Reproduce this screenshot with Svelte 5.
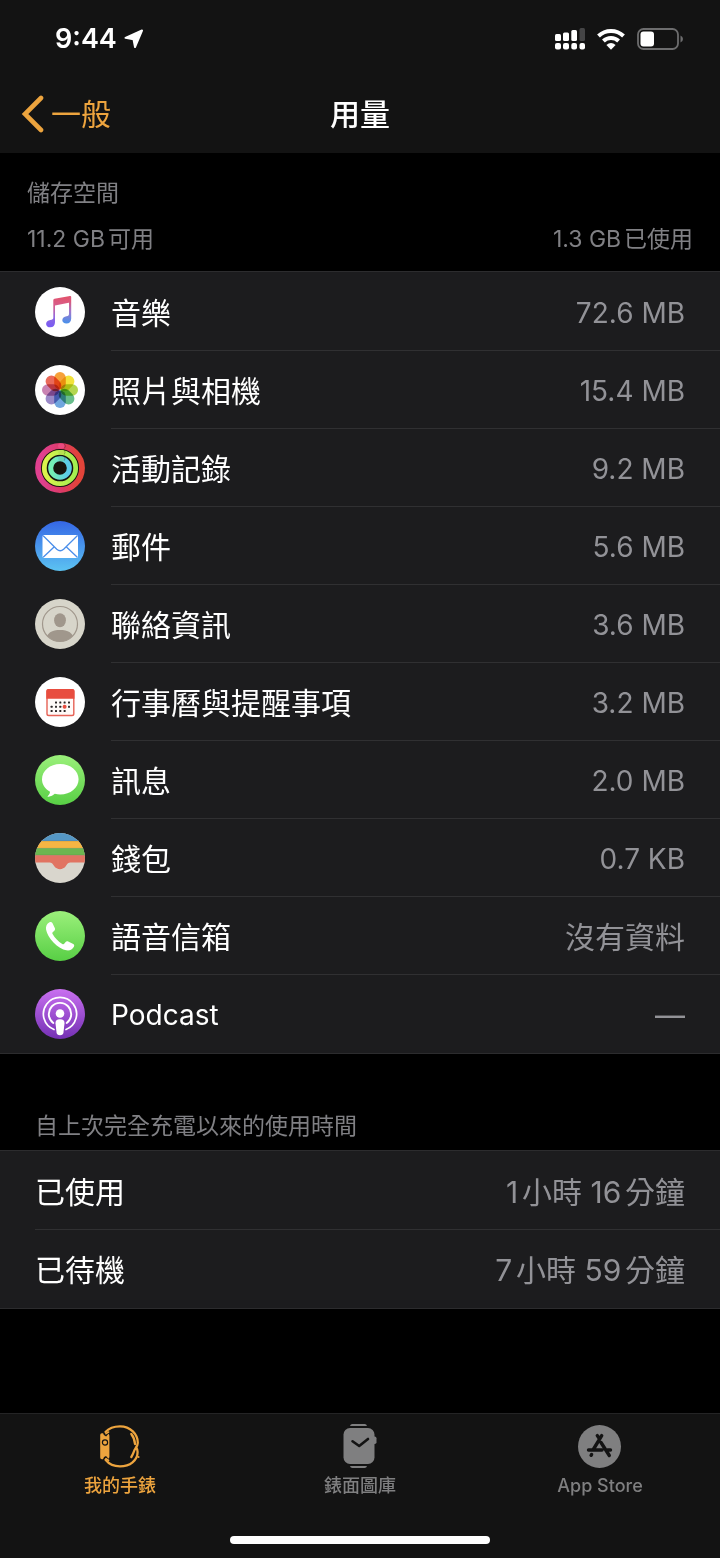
<script>
  const apps = [
    { icon: 'music', name: '音樂', size: '72.6 MB' },
    { icon: 'photos', name: '照片與相機', size: '15.4 MB' },
    { icon: 'activity', name: '活動記錄', size: '9.2 MB' },
    { icon: 'mail', name: '郵件', size: '5.6 MB' },
    { icon: 'contacts', name: '聯絡資訊', size: '3.6 MB' },
    { icon: 'calendar', name: '行事曆與提醒事項', size: '3.2 MB' },
    { icon: 'messages', name: '訊息', size: '2.0 MB' },
    { icon: 'wallet', name: '錢包', size: '0.7 KB' },
    { icon: 'phone', name: '語音信箱', size: '沒有資料' },
    { icon: 'podcast', name: 'Podcast', size: '—' }
  ];

  const times = [
    { name: '已使用', value: '1小時 16分鐘' },
    { name: '已待機', value: '7小時 59分鐘' }
  ];

  // Latin-only strings are set a step smaller than Chinese ones.
  const isLatin = (text) => /^[\w. ]+$/.test(text);

  const petals = ['#f6a13a', '#f2e23c', '#b4d650', '#68bd8c', '#70a6de', '#9b8ac8', '#c983b2', '#ea6a5a'];

  const days = [
    [21, 25.5], [25.3, 25.5], [29.6, 25.5], [34, 25.5],
    [16.6, 29.8], [21, 29.8], [25.3, 29.8], [34, 29.8],
    [16.6, 34], [21, 34], [25.3, 34], [29.6, 34]
  ];
</script>

{#snippet appIcon(kind)}
  <svg class="app-icon" viewBox="0 0 50 50" aria-hidden="true">
    {#if kind === 'music'}
      <defs>
        <linearGradient id="note" gradientUnits="userSpaceOnUse" x1="28" y1="10" x2="24" y2="40">
          <stop offset="0" stop-color="#e2536c" />
          <stop offset="0.35" stop-color="#d55f92" />
          <stop offset="0.7" stop-color="#8e68e0" />
          <stop offset="1" stop-color="#7a5cf2" />
        </linearGradient>
        <linearGradient id="note-right" gradientUnits="userSpaceOnUse" x1="34" y1="14" x2="32" y2="36">
          <stop offset="0" stop-color="#dc5878" />
          <stop offset="0.45" stop-color="#a277cc" />
          <stop offset="1" stop-color="#4a90ea" />
        </linearGradient>
      </defs>
      <circle cx="25" cy="25" r="25" fill="#fff" />
      <path fill="url(#note)" d="M18.3 13.2q0-1.2 1.2-1.4L35 9v6.4l-15 3v16.900c0 3-1.700 5-4.700 5-2.400 0-4.200-1.400-4.200-3.400 0-2.300 1.800-3.400 4.200-3.900 2-.4 3-.6 3-2.500z" />
      <path fill="url(#note-right)" d="M34 9.200 35.200 9q1-.1 1 .9v21.600c0 3-1.800 5-4.800 5-2.400 0-4.100-1.400-4.100-3.300 0-2.300 1.800-3.500 4.200-4 1.900-.4 2.500-.8 2.500-2.500z" />
    {:else if kind === 'photos'}
      <circle cx="25" cy="25" r="25" fill="#fff" />
      <g class="petals">
        {#each petals as color, i}
          <rect x="19.200" y="7" width="11.600" height="17.500" rx="5.800" fill={color} transform="rotate({i * 45} 25 25)" />
        {/each}
      </g>
    {:else if kind === 'activity'}
      <defs>
        <linearGradient id="move"><stop offset="0.1" stop-color="#e0408f" /><stop offset="0.55" stop-color="#dc3a66" /><stop offset="0.9" stop-color="#e2443a" /></linearGradient>
        <linearGradient id="exercise"><stop offset="0" stop-color="#dcf34c" /><stop offset="1" stop-color="#a2ee50" /></linearGradient>
        <linearGradient id="stand"><stop offset="0.1" stop-color="#74f0b4" /><stop offset="0.9" stop-color="#5ccbe8" /></linearGradient>
      </defs>
      <circle cx="25" cy="25" r="24" fill="#17150f" />
      <g fill="none">
        <circle cx="25" cy="25" r="22" stroke="url(#move)" stroke-width="5.800" />
        <circle cx="25" cy="25" r="15.700" stroke="url(#exercise)" stroke-width="4.800" />
        <circle cx="25" cy="25" r="9.300" stroke="url(#stand)" stroke-width="5" />
        <g stroke-linecap="round">
          <path d="M25.500 3h1.500" stroke="#ea4a80" stroke-width="5" />
          <path d="M25.500 9.300h1.500" stroke="#b9df51" stroke-width="4.600" />
          <path d="M25.500 15.700h1.500" stroke="#68cfb4" stroke-width="4.600" />
        </g>
        <path d="M29.400 .8q2 2.200 0 4.600M29.200 7.200q1.800 2.100 0 4.300M29.200 13.700q1.500 2 0 4" stroke="#000" stroke-opacity="0.35" stroke-width="0.800" />
      </g>
    {:else if kind === 'mail'}
      <defs><linearGradient id="sky" x2="0" y2="1"><stop offset="0" stop-color="#3567e6" /><stop offset="1" stop-color="#5cc3f2" /></linearGradient></defs>
      <circle cx="25" cy="25" r="25" fill="url(#sky)" />
      <rect x="7.500" y="14" width="35.500" height="23" rx="1.800" fill="#fff" />
      <path d="M8.200 14.700 21.800 28.200q3.400 3.200 6.800 0L42.300 14.700M8.200 36.300l11.100-10.600M42.300 36.300 31.200 25.700" fill="none" stroke="#4a8eea" stroke-width="1.300" />
    {:else if kind === 'contacts'}
      <defs><clipPath id="portrait"><circle cx="25" cy="25" r="17.500" /></clipPath></defs>
      <circle cx="25" cy="25" r="25" fill="#d7d5ca" />
      <g fill="#a0978c" clip-path="url(#portrait)">
        <ellipse cx="25" cy="21.300" rx="5.900" ry="7" />
        <path d="M10 45C10.500 33.500 17 31 25 31s14.500 2.500 15 14z" />
      </g>
      <circle cx="25" cy="25" r="17.500" fill="none" stroke="#a0978c" stroke-width="1.200" />
    {:else if kind === 'calendar'}
      <circle cx="25" cy="25" r="25" fill="#fff" />
      <rect x="12" y="12.700" width="26.800" height="25.800" rx="1.800" fill="#fffaf8" stroke="#e66256" stroke-width="1.400" />
      <path fill="#e84d3f" d="M11.300 14q0-2 2-2h24.200q2 0 2 2v7.800H11.300z" />
      <g fill="#2b2626">
        {#each days as [x, y]}
          <rect x={x - 1} y={y - 1} width="2" height="2" rx="0.500" />
        {/each}
      </g>
      <circle cx="29.600" cy="29.800" r="2" fill="#e84d3f" />
    {:else if kind === 'messages'}
      <defs><linearGradient id="leaf" x2="0" y2="1"><stop offset="0" stop-color="#9bf07b" /><stop offset="1" stop-color="#58cf45" /></linearGradient></defs>
      <circle cx="25" cy="25" r="25" fill="url(#leaf)" />
      <path fill="#fff" d="M25.200 9C15 9 7 15.700 7 24.300c0 5 2.800 9.500 8 12.400-.1 1.700-.8 3-2.200 4.400-.5.600 0 .9.700.7 2.500-.5 4.600-1.600 6.300-3.100 1.700.5 3.500.8 5.400.8 10.300 0 18.400-6.600 18.400-15.200S35.500 9 25.200 9z" />
    {:else if kind === 'wallet'}
      <defs><clipPath id="purse"><circle cx="25" cy="25" r="25" /></clipPath></defs>
      <g clip-path="url(#purse)">
        <path fill="#d9d6cd" d="M0 0h50v50H0z" />
        <path fill="#5597c5" d="M0 0h50v8H0z" />
        <path fill="#f5b544" d="M0 8h50v7.300H0z" />
        <path fill="#6cb650" d="M0 15.300h50v6.900H0z" />
        <path fill="#e17462" d="M0 22.200h50v7.200H36.500c-3.700 0-4.300 1.500-5.600 3.600-2.900 4.200-8.900 4.200-11.800 0-1.300-2.100-1.900-3.600-5.600-3.600H0z" />
        <path stroke="#000" stroke-opacity="0.130" stroke-width="0.900" d="M0 8h50M0 15.300h50M0 22.200h50" />
      </g>
    {:else if kind === 'phone'}
      <defs><linearGradient id="grass" x2="0" y2="1"><stop offset="0" stop-color="#9bf07b" /><stop offset="1" stop-color="#58cf45" /></linearGradient></defs>
      <circle cx="25" cy="25" r="25" fill="url(#grass)" />
      <path fill="#fff" d="M14.500 11.300c1.300-.7 2.200-.4 2.900.8l2.400 5c.5 1.200.3 2.100-.7 2.900l-1.200 1c-.7.700-.7 1.300-.3 2.100 2.300 4.200 5.600 7.500 9.700 9.800.9.500 1.500.4 2.100-.3l1-1.400c.8-1 1.700-1.200 2.800-.7l5 2.600c1.100.7 1.300 1.500.7 2.600-1.500 2.800-4.200 4.200-7.600 3.600-3.800-.7-8.700-3.700-12.800-7.900S11.900 22.600 11.100 18.800c-.6-3.200.7-6 3.400-7.500z" />
    {:else}
      <defs><linearGradient id="plum" x2="0" y2="1"><stop offset="0" stop-color="#c970f0" /><stop offset="1" stop-color="#7430b4" /></linearGradient></defs>
      <circle cx="25" cy="25" r="25" fill="url(#plum)" />
      <g fill="none" stroke="#fff" stroke-linecap="round">
        <path stroke-width="1.700" d="M19 40.500a16.600 16.600 0 1 1 12 0" />
        <path stroke-width="1.900" d="M18.300 34a11.200 11.200 0 1 1 13.400 0" />
      </g>
      <circle cx="25" cy="24.500" r="4.300" fill="#fff" />
      <path fill="#fff" d="M25 30.200c3.200 0 4.700 1.300 4.500 4l-1 9c-.3 2.200-1.300 3-3.500 3s-3.200-.8-3.500-3l-1-9c-.2-2.700 1.300-4 4.500-4z" />
    {/if}
  </svg>
{/snippet}

{#snippet row(name, value)}
  <div class="row">
    <span class:latin={isLatin(name)}>{name}</span>
    <span class="value" class:latin={isLatin(value)}>{value}</span>
  </div>
{/snippet}

<div class="page">
  <header>
    <div class="status">
      <div class="clock">
        <span>9:44</span>
        <svg width="20" height="20" viewBox="0 0 20 20" aria-hidden="true">
          <path d="M1.500 8.800 18 1.500 11 18l-1.500-7.800z" fill="#fff" stroke="#fff" stroke-width="2" stroke-linejoin="round" />
        </svg>
      </div>
      <div class="indicators">
        <svg width="30" height="22" viewBox="0 0 30 22" aria-hidden="true">
          <g fill="#fff">
            <rect x="0" y="6" width="6" height="7" rx="1.500" />
            <rect x="8" y="4.500" width="6" height="8.500" rx="1.500" />
            <rect x="16.300" y="2" width="5.700" height="11" rx="1.500" />
            <rect x="0" y="15" width="6" height="6.500" rx="2" />
            <rect x="8" y="15" width="6" height="6.500" rx="2" />
            <rect x="16.300" y="15" width="5.700" height="6.500" rx="2" />
            <rect x="24.500" y="15" width="5.500" height="6.500" rx="2" />
          </g>
          <rect x="24.500" y="0" width="5.500" height="13" rx="1.500" fill="#454546" />
        </svg>
        <svg width="28" height="22" viewBox="0 0 28 22" aria-hidden="true">
          <g fill="none" stroke="#fff" stroke-width="4">
            <path d="M1.500 8a18 18 0 0 1 25 0" />
            <path d="M6.400 13a11 11 0 0 1 15.200 0" />
          </g>
          <path d="M9.400 17q4.600-3.800 9.200 0L14 21.700z" fill="#fff" />
        </svg>
        <svg width="46" height="22" viewBox="0 0 46 22" aria-hidden="true">
          <rect x="1" y="1" width="40" height="20" rx="5.500" fill="none" stroke="#6d6d6e" stroke-width="1.800" />
          <rect x="3.500" y="3.500" width="13.500" height="15" rx="3" fill="#fff" />
          <path d="M43.500 7.500q2.500 1 2.500 3.500t-2.500 3.500z" fill="#6d6d6e" />
        </svg>
      </div>
    </div>
    <nav class="bar">
      <button class="back" type="button">
        <svg width="24" height="38" viewBox="0 0 24 38" aria-hidden="true">
          <path d="M20 3 4 19l16 16" fill="none" stroke="currentColor" stroke-width="4.600" stroke-linecap="round" stroke-linejoin="miter" />
        </svg>
        一般
      </button>
      <h1>用量</h1>
    </nav>
  </header>

  <main>
    <section>
      <div class="heading storage">
        <h2>儲存空間</h2>
        <p><span>11.2 GB可用</span><span>1.3 GB已使用</span></p>
      </div>
      <ul class="list">
        {#each apps as app}
          <li>
            {@render appIcon(app.icon)}
            {@render row(app.name, app.size)}
          </li>
        {/each}
      </ul>
    </section>

    <section>
      <div class="heading usage"><h2>自上次完全充電以來的使用時間</h2></div>
      <ul class="list">
        {#each times as time}
          <li>{@render row(time.name, time.value)}</li>
        {/each}
      </ul>
    </section>
  </main>

  <footer>
    <nav class="tabs">
      <button class="active" type="button">
        <svg width="44" height="44" viewBox="0 0 44 44" aria-hidden="true">
          <g fill="none" stroke="currentColor" stroke-linecap="round">
            <path stroke-width="2.300" d="M7.500 8C11 4 16 2.300 22 2.300c10.500 0 17.800 8 17.800 16.400 0 2.800-1.200 4.400-2.600 6.200-1.300 1.700-1.800 4.900-3.900 8.100" />
            <path stroke-width="2.300" d="M7.500 35.800c3.500 4.400 8.500 6.600 14.500 6.600 10 0 17.600-6 17.600-14.400 0-1.800-.4-3.200-1.300-4.300" />
            <path stroke-width="2.300" d="M33.300 10c2.300 3 3.500 6 3.700 10" />
            <path stroke-width="1.600" d="M8 9.700l2.600-1.700M8 34.600l2.600 1.700" />
          </g>
          <path fill="currentColor" d="M2.200 11q0-1.700 1.700-1.700h1.200q.5 2.800 3 3.200l2.400-2.800q.9.700.9 2.300v20.500q0 1.600-.9 2.300L8 32q-2.400.4-3 3.300H3.900q-1.700 0-1.700-1.700z" />
          <circle cx="7" cy="18.500" r="2.600" fill="none" stroke="#131313" stroke-width="1.200" />
          <circle cx="40.500" cy="33" r="1.100" fill="currentColor" />
        </svg>
        <span>我的手錶</span>
      </button>
      <button type="button">
        <svg width="44" height="44" viewBox="0 0 44 44" aria-hidden="true">
          <g fill="currentColor">
            <path d="M12 2q.4-2 2.400-2h12.200q2 0 2.400 2z" />
            <rect x="5.500" y="4" width="31" height="36" rx="6.500" />
            <path d="M35.500 12.500h1.200q1.800 0 1.800 1.800v4q0 1.800-1.800 1.800h-1.200z" />
            <path d="M12 42h17q-.4 2-2.400 2H14.400q-2 0-2.400-2z" />
          </g>
          <path d="m14.500 17.300 6.700 4.700 8.800-7" fill="none" stroke="#131313" stroke-width="2.600" stroke-linecap="round" stroke-linejoin="round" />
        </svg>
        <span>錶面圖庫</span>
      </button>
      <button type="button">
        <svg width="44" height="44" viewBox="0 0 44 44" aria-hidden="true">
          <circle cx="21.500" cy="22.500" r="21.500" fill="currentColor" />
          <g fill="none" stroke="#131313" stroke-width="3.400" stroke-linecap="round">
            <path d="M23.700 11.600 15.300 25.500M19.300 11.600l2.200 3.200M23 18.500l8.300 13M10.500 26H24M29.500 26h3M13.100 31.300l.5-.8" />
          </g>
        </svg>
        <span>App Store</span>
      </button>
    </nav>
    <div class="home"></div>
  </footer>
</div>

<style>
  :global(body) {
    margin: 0;
    background: #000;
  }

  .page {
    display: flex;
    flex-direction: column;
    min-height: 100vh;
    color: #fff;
    font-family: Inter, 'Noto Sans CJK TC', sans-serif;
    font-size: 30px;
    line-height: 40px;
    text-autospace: normal;
  }

  h1,
  h2,
  p,
  ul {
    margin: 0;
    padding: 0;
    font-size: inherit;
    font-weight: 400;
  }

  button {
    border: 0;
    padding: 0;
    background: none;
    color: inherit;
    font: inherit;
  }

  svg {
    display: block;
    flex: none;
  }

  header,
  footer {
    background: #131313;
  }

  .status {
    display: flex;
    justify-content: space-between;
    align-items: center;
    height: 78px;
    padding: 0 37px 0 55px;
    box-sizing: border-box;
  }

  .clock {
    display: flex;
    align-items: center;
    gap: 7px;
    font-size: 27px;
    font-weight: 600;
  }

  .indicators {
    display: flex;
    gap: 12px;
  }

  .bar {
    display: grid;
    grid-template-columns: 1fr auto 1fr;
    align-items: center;
    height: 75px;
    padding: 0 21px 3px;
    box-sizing: border-box;
  }

  .bar h1 {
    font-weight: 500;
  }

  .back {
    display: flex;
    align-items: center;
    justify-self: start;
    gap: 6px;
  }

  .back,
  .active {
    color: #eda43e;
  }

  main {
    flex: 1;
  }

  .heading {
    color: #808084;
    font-size: 23px;
    line-height: 32px;
  }

  .storage {
    padding: 24px 27px 16px;
  }

  .storage p {
    display: flex;
    justify-content: space-between;
    margin-top: 14px;
  }

  .usage {
    padding: 56px 35px 8px;
  }

  .list {
    padding-top: 1px;
    list-style: none;
    background: #1c1c1e;
    border-top: 1px solid #2c2c2e;
    border-bottom: 1px solid #2c2c2e;
  }

  li {
    display: flex;
    align-items: center;
    gap: 26px;
    padding-left: 35px;
  }

  .row {
    display: flex;
    flex: 1;
    justify-content: space-between;
    align-items: center;
    height: 78px;
    padding: 3px 35px 0 0;
    box-sizing: border-box;
    border-bottom: 1px solid #303032;
  }

  li:last-child .row {
    border-bottom-color: transparent;
  }

  .value {
    color: #929297;
  }

  .latin {
    font-size: 28px;
  }

  .app-icon {
    width: 50px;
    height: 50px;
  }

  .petals {
    isolation: isolate;
  }

  .petals rect {
    mix-blend-mode: multiply;
  }

  footer {
    border-top: 1px solid #242425;
  }

  .tabs {
    display: grid;
    grid-template-columns: repeat(3, 1fr);
    padding-top: 10px;
    color: #7f7f80;
    font-size: 18px;
    font-weight: 500;
    line-height: 24px;
  }

  .tabs button {
    display: flex;
    flex-direction: column;
    align-items: center;
    gap: 6px;
  }

  .tabs .active {
    color: #eda43e;
  }

  .home {
    width: 36%;
    height: 8px;
    margin: 38px auto 14px;
    border-radius: 4px;
    background: #fff;
  }
</style>
